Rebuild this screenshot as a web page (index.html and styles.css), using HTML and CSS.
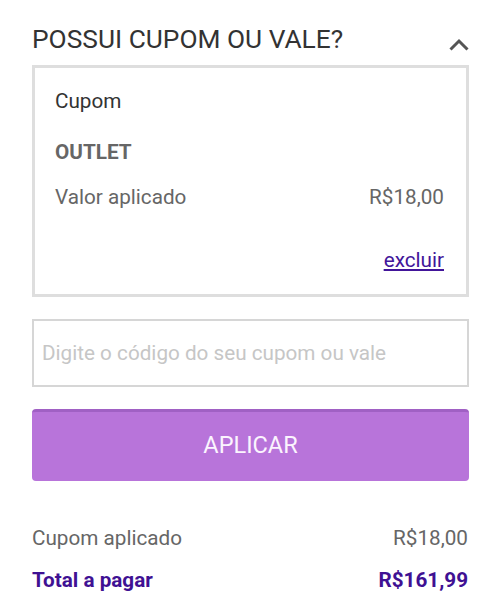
FILE: index.html
```html
<!DOCTYPE html>
<html lang="pt-BR">
<head>
  <meta charset="UTF-8">
  <meta name="viewport" content="width=device-width, initial-scale=1.0">
  <title>Cupom ou vale</title>
  <link rel="stylesheet" href="styles.css">
</head>
<body>
  <div class="voucher">
    <div class="voucher-header">
      <h2 class="voucher-title">POSSUI CUPOM OU VALE?</h2>
      <svg class="chevron" width="20" height="14" viewBox="0 0 20 14">
        <polyline points="1.5,11.5 10,3 18.5,11.5" fill="none" stroke="#555" stroke-width="3"/>
      </svg>
    </div>

    <div class="applied">
      <div class="applied-label">Cupom</div>
      <div class="applied-code">OUTLET</div>
      <div class="applied-row">
        <span>Valor aplicado</span>
        <span>R$18,00</span>
      </div>
      <div class="applied-actions">
        <a href="#" class="remove-link">excluir</a>
      </div>
    </div>

    <input type="text" class="code-input" placeholder="Digite o código do seu cupom ou vale">
    <button class="apply-btn">APLICAR</button>

    <div class="summary">
      <div class="summary-row">
        <span>Cupom aplicado</span>
        <span>R$18,00</span>
      </div>
      <div class="summary-row total">
        <span>Total a pagar</span>
        <span>R$161,99</span>
      </div>
    </div>
  </div>
</body>
</html>
```

FILE: styles.css
```css
body {
  margin: 0;
  background: #fff;
  font-family: Roboto, "Noto Sans", sans-serif;
  color: #333;
}
.voucher {
  padding: 24px 31px 0 32px;
}
.voucher-header {
  display: flex;
  justify-content: space-between;
  align-items: flex-start;
}
.voucher-title {
  margin: 0;
  font-size: 26.3px;
  line-height: 30px;
  font-weight: 400;
  color: #333;
}
.chevron {
  display: block;
  margin-top: 14px;
}
.applied {
  margin-top: 11px;
  border: 3px solid #dedede;
  padding: 21px 22px 22px 20px;
  font-size: 20.7px;
  line-height: 24px;
}
.applied-label {
  color: #333;
}
.applied-code {
  margin-top: 27px;
  font-weight: 700;
  color: #666;
}
.applied-row {
  margin-top: 21px;
  display: flex;
  justify-content: space-between;
  color: #666;
}
.applied-actions {
  margin-top: 39px;
  text-align: right;
}
.remove-link {
  color: #42159a;
  text-decoration: underline;
}
.code-input {
  display: block;
  box-sizing: border-box;
  width: 100%;
  height: 68px;
  margin-top: 22px;
  padding: 0 8px;
  border: 2px solid #d6d6d6;
  border-radius: 0;
  font-family: inherit;
  font-size: 20.7px;
  color: #333;
  outline: none;
}
.code-input::placeholder {
  color: #c6c6c6;
}
.apply-btn {
  display: block;
  box-sizing: border-box;
  width: 100%;
  height: 72px;
  margin-top: 22px;
  border: none;
  border-top: 3px solid #a060c4;
  border-radius: 4px;
  background: #b874da;
  color: #fbf4fe;
  font-family: inherit;
  font-size: 23.5px;
  padding: 0 0 4px;
}
.summary {
  margin-top: 45px;
  font-size: 20.7px;
  line-height: 24px;
}
.summary-row {
  display: flex;
  justify-content: space-between;
  color: #666;
  padding-right: 1px;
}
.summary-row.total {
  margin-top: 18px;
  font-weight: 700;
  color: #3f1193;
}
```
